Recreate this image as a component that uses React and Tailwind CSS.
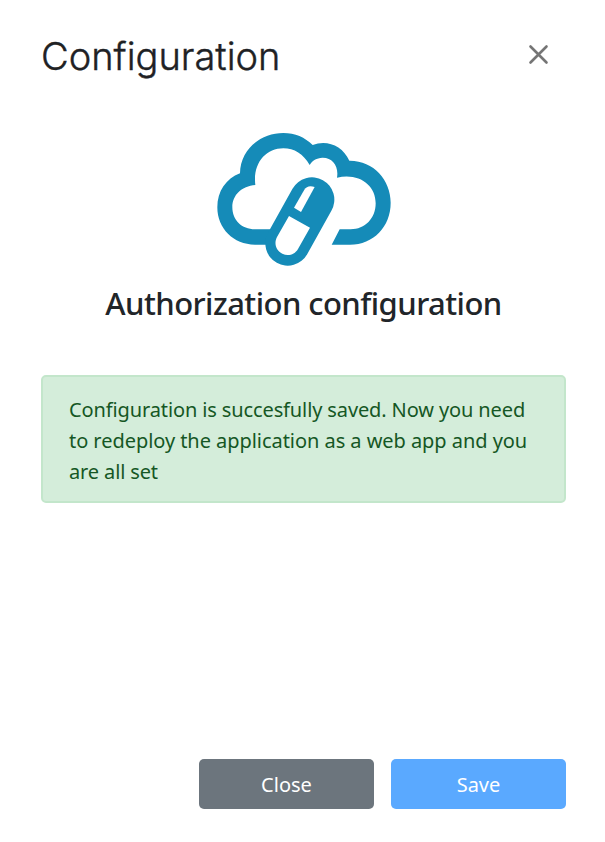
function Logo() {
  return (
    <svg className="ml-[2px] h-[155px] w-[200px] shrink-0" viewBox="0 0 600 465" role="img" aria-label="Cloud with pill">
      <path
        fill="#158bb8"
        d="M150 374C85 374 37 325 37 262C37 214 63 176 105 160C106 87 168 39 235 39C270 39 300 52 323 75C364 58 413 76 433 122C505 121 557 180 557 248C557 320 505 374 435 374H380L404 328H437C480 328 512 295 512 250C512 196 463 158 396 173C402 138 382 112 352 113C335 114 322 121 314 135C295 102 268 85 235 85C182 85 143 130 151 195C110 198 82 225 82 262C82 300 110 328 150 328H230V374Z"
      />
      <path d="M321 239L248 370" stroke="#158bb8" strokeWidth="134" strokeLinecap="round" />
      <path fill="#fff" d="M252 288L315 323L279 387C269 404 249 410 232 401C213 392 206 370 216 351Z" />
      <path fill="#fff" d="M267 263L298 209C304 199 315 196 329 201L288 276Z" />
    </svg>
  );
}

export default function App() {
  return (
    <main className="flex h-[842px] w-[605px] flex-col bg-white px-[41px] font-['Noto_Sans',sans-serif] text-[#212529]">
      <header className="mt-[31px] flex h-[48px] w-[508px] items-center justify-between">
        <h1 className="whitespace-nowrap pt-px font-['Inter',sans-serif] text-[38px] font-light leading-[48px] text-[#202124] [-webkit-text-stroke:0.4px_#202124]">Configuration</h1>
        <button aria-label="Dismiss" className="flex size-[22px] items-center justify-center">
          <svg className="size-[22px] translate-x-[0.5px] -translate-y-[0.5px]" viewBox="0 0 22 22" fill="none" stroke="#757575" strokeWidth="2.6" strokeLinecap="round">
            <path d="M3 3L19 19M19 3L3 19" />
          </svg>
        </button>
      </header>
      <section className="mt-[41px] flex w-[525px] flex-col items-center">
        <Logo />
        <h2 className="mt-[8px] whitespace-nowrap text-[31px] font-medium leading-[40px] tracking-[-0.55px]">Authorization configuration</h2>
      </section>
      <div className="mt-[52px] h-[128px] w-[525px] rounded-[5px] border-2 border-[#c3e6cb] bg-[#d4edda] px-[26px] pt-[17px] text-[20px] leading-[31px] text-[#155724]">
        <p className="whitespace-nowrap tracking-[-0.12px]">Configuration is succesfully saved. Now you need</p>
        <p className="whitespace-nowrap tracking-[-0.05px]">to redeploy the application as a web app and you</p>
        <p className="whitespace-nowrap tracking-[-0.13px]">are all set</p>
      </div>
      <footer className="mt-[256px] flex w-[525px] justify-end gap-[17px] text-[20px] text-white">
        <button className="h-[50px] w-[175px] rounded-[5px] bg-[#6c757d] pt-px">Close</button>
        <button className="h-[50px] w-[175px] rounded-[5px] bg-[#5aa9ff] pt-px">Save</button>
      </footer>
    </main>
  );
}
